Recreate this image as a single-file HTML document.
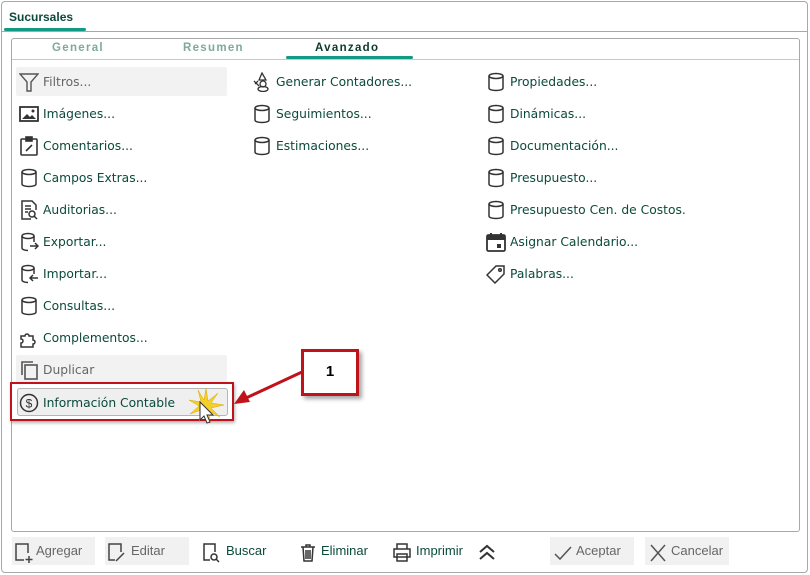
<!DOCTYPE html>
<html><head><meta charset="utf-8"><style>
*{box-sizing:border-box;margin:0;padding:0}
body{width:810px;height:575px;background:#fff;font-family:"Liberation Sans",sans-serif;position:relative;overflow:hidden;color:#0b4a3a}
.abs{position:absolute}
.outer{left:1px;top:1px;width:807px;height:572px;border:1px solid #a8a8a8;border-radius:4px}
.item{position:absolute;font-family:"DejaVu Sans",sans-serif;font-size:12.3px;height:28px;line-height:30px;white-space:nowrap}
.item svg{position:absolute;left:0;top:5px}
.item span{position:absolute;left:24px}
.ft{position:absolute;top:537px;height:28px;line-height:28px;font-family:"Liberation Sans Narrow","Liberation Sans",sans-serif;font-size:13px;color:#0b4a3a}
.ft.dis{background:#f1f1f1;color:#666}
.ft svg{position:absolute;top:5px}
.tab{position:absolute;top:42px;font-size:11.5px;font-weight:bold;letter-spacing:1.3px}
</style></head><body>
<div class="abs outer"></div>
<div class="abs" style="left:9px;top:10px;font-size:12px;font-weight:bold;color:#0b4a3a">Sucursales</div>
<div class="abs" style="left:4px;top:28px;width:82px;height:3px;background:#129a85;border-radius:2px"></div>
<div class="abs" style="left:1px;top:31px;width:807px;height:1px;background:#a8a8a8"></div>
<div class="abs" style="left:11px;top:38px;width:789px;height:494px;border:1px solid #a8a8a8;border-radius:3px"></div>
<div class="tab" style="left:52px;color:#7fa99c">General</div>
<div class="tab" style="left:183px;color:#7fa99c">Resumen</div>
<div class="tab" style="left:315px;color:#0b3a2e">Avanzado</div>
<div class="abs" style="left:286px;top:56px;width:127px;height:3px;background:#129a85;border-radius:2px"></div>
<div class="abs" style="left:12px;top:59px;width:787px;height:1px;background:#c8c8c8"></div>

<div class="abs" style="left:16px;top:67px;width:211px;height:29px;background:#f2f2f2;border-radius:2px"></div>
<div class="abs" style="left:16px;top:355px;width:211px;height:28px;background:#f2f2f2;border-radius:2px"></div>
<div class="abs" style="left:17px;top:388px;width:211px;height:28px;background:#efefef;border:1px solid #b5b5b5;border-radius:3px"></div>
<div class="abs" style="left:10px;top:382px;width:224px;height:39px;border:2px solid #c0121b;box-shadow:1px 2px 3px rgba(0,0,0,.3)"></div>

<!-- column 1 -->
<div class="item" style="left:19px;top:67px;color:#666"><svg width="20" height="20" viewBox="0 0 20 20" fill="none" stroke="#555" stroke-width="1.4"><path d="M1 2h18l-7 8v9h-4v-9z"/></svg><span>Filtros...</span></div>
<div class="item" style="left:19px;top:99px"><svg width="20" height="20" viewBox="0 0 20 20"><rect x="1" y="3" width="18" height="14" fill="none" stroke="#333" stroke-width="1.8"/><path d="M3 15l5-5 3 3 2-2 4 4z" fill="#333"/><circle cx="14" cy="7" r="1.5" fill="#333"/></svg><span>Imágenes...</span></div>
<div class="item" style="left:19px;top:131px"><svg width="20" height="20" viewBox="0 0 20 20" fill="none" stroke="#333" stroke-width="1.6"><rect x="2" y="3" width="16" height="16" rx="1"/><rect x="7" y="1" width="6" height="4" fill="#333"/><path d="M7 15l6-6"/></svg><span>Comentarios...</span></div>
<div class="item" style="left:19px;top:163px"><svg width="20" height="20" viewBox="0 0 20 20" fill="none" stroke="#333" stroke-width="1.5"><ellipse cx="10" cy="4" rx="7" ry="2.5"/><path d="M3 4v12c0 1.5 3 2.5 7 2.5s7-1 7-2.5V4"/></svg><span>Campos Extras...</span></div>
<div class="item" style="left:19px;top:195px"><svg width="20" height="20" viewBox="0 0 20 20" fill="none" stroke="#333" stroke-width="1.5"><path d="M12 19H3V1h10l4 4v5"/><path d="M6 6h6M6 9h6M6 12h3"/><circle cx="13" cy="14" r="3"/><path d="M15 16l3 3"/></svg><span>Auditorias...</span></div>
<div class="item" style="left:19px;top:227px"><svg width="20" height="20" viewBox="0 0 20 20" fill="none" stroke="#333" stroke-width="1.5"><ellipse cx="9" cy="4" rx="6" ry="2.5"/><path d="M3 4v12c0 1.5 3 2.5 6 2.5M15 4v6"/><path d="M11 14h8M16 11l3 3-3 3"/></svg><span>Exportar...</span></div>
<div class="item" style="left:19px;top:259px"><svg width="20" height="20" viewBox="0 0 20 20" fill="none" stroke="#333" stroke-width="1.5"><ellipse cx="9" cy="4" rx="6" ry="2.5"/><path d="M3 4v12c0 1.5 3 2.5 6 2.5M15 4v6"/><path d="M19 14h-8M14 11l-3 3 3 3"/></svg><span>Importar...</span></div>
<div class="item" style="left:19px;top:291px"><svg width="20" height="20" viewBox="0 0 20 20" fill="none" stroke="#333" stroke-width="1.5"><ellipse cx="10" cy="4" rx="7" ry="2.5"/><path d="M3 4v12c0 1.5 3 2.5 7 2.5s7-1 7-2.5V4"/></svg><span>Consultas...</span></div>
<div class="item" style="left:19px;top:323px"><svg width="20" height="20" viewBox="0 0 20 20" fill="none" stroke="#333" stroke-width="1.5"><path d="M2 8h4a2 2 0 1 1 4 0h4v4a2 2 0 1 1 0 4v3H2v-4a2 2 0 1 0 0-4z"/></svg><span>Complementos...</span></div>
<div class="item" style="left:19px;top:355px;color:#666"><svg width="20" height="20" viewBox="0 0 20 20" fill="none" stroke="#555" stroke-width="1.6"><rect x="6" y="5" width="12" height="14"/><path d="M3 15V2h11"/></svg><span>Duplicar</span></div>
<div class="item" style="left:19px;top:388px"><svg width="20" height="20" viewBox="0 0 20 20" fill="none" stroke="#333" stroke-width="1.5"><circle cx="10" cy="10" r="8.5"/><text x="10" y="14.5" font-size="12" text-anchor="middle" fill="#333" stroke="none" font-family="Liberation Sans">$</text></svg><span>Información Contable</span></div>
<svg class="abs" style="left:186px;top:386px" width="40" height="40" viewBox="0 0 40 40"><path d="M20 2l2 13 10-8-7 10 13 2-13 3 9 9-11-6 1 12-5-11-6 10 2-12-11 4 9-8-10-6 12 2-3-12 6 10z" fill="#f6d02a" stroke="#d9a800" stroke-width=".5"/><path d="M14 16v18l4-4 3 7 3-1-3-7h6z" fill="#fff" stroke="#333" stroke-width="1"/></svg>

<!-- column 2 -->
<div class="item" style="left:252px;top:67px"><svg width="20" height="20" viewBox="0 0 20 20" fill="none" stroke="#333" stroke-width="1.3"><path d="M10 1l-3 7h7z"/><circle cx="11" cy="12" r="3"/><ellipse cx="11" cy="17" rx="5" ry="2.5"/><path d="M2 9l5 5M3 12l3-3"/></svg><span>Generar Contadores...</span></div>
<div class="item" style="left:252px;top:99px"><svg width="20" height="20" viewBox="0 0 20 20" fill="none" stroke="#333" stroke-width="1.5"><ellipse cx="10" cy="4" rx="7" ry="2.5"/><path d="M3 4v12c0 1.5 3 2.5 7 2.5s7-1 7-2.5V4"/></svg><span>Seguimientos...</span></div>
<div class="item" style="left:252px;top:131px"><svg width="20" height="20" viewBox="0 0 20 20" fill="none" stroke="#333" stroke-width="1.5"><ellipse cx="10" cy="4" rx="7" ry="2.5"/><path d="M3 4v12c0 1.5 3 2.5 7 2.5s7-1 7-2.5V4"/></svg><span>Estimaciones...</span></div>

<!-- column 3 -->
<div class="item" style="left:486px;top:67px"><svg width="20" height="20" viewBox="0 0 20 20" fill="none" stroke="#333" stroke-width="1.5"><ellipse cx="10" cy="4" rx="7" ry="2.5"/><path d="M3 4v12c0 1.5 3 2.5 7 2.5s7-1 7-2.5V4"/></svg><span>Propiedades...</span></div>
<div class="item" style="left:486px;top:99px"><svg width="20" height="20" viewBox="0 0 20 20" fill="none" stroke="#333" stroke-width="1.5"><ellipse cx="10" cy="4" rx="7" ry="2.5"/><path d="M3 4v12c0 1.5 3 2.5 7 2.5s7-1 7-2.5V4"/></svg><span>Dinámicas...</span></div>
<div class="item" style="left:486px;top:131px"><svg width="20" height="20" viewBox="0 0 20 20" fill="none" stroke="#333" stroke-width="1.5"><ellipse cx="10" cy="4" rx="7" ry="2.5"/><path d="M3 4v12c0 1.5 3 2.5 7 2.5s7-1 7-2.5V4"/></svg><span>Documentación...</span></div>
<div class="item" style="left:486px;top:163px"><svg width="20" height="20" viewBox="0 0 20 20" fill="none" stroke="#333" stroke-width="1.5"><ellipse cx="10" cy="4" rx="7" ry="2.5"/><path d="M3 4v12c0 1.5 3 2.5 7 2.5s7-1 7-2.5V4"/></svg><span>Presupuesto...</span></div>
<div class="item" style="left:486px;top:195px"><svg width="20" height="20" viewBox="0 0 20 20" fill="none" stroke="#333" stroke-width="1.5"><ellipse cx="10" cy="4" rx="7" ry="2.5"/><path d="M3 4v12c0 1.5 3 2.5 7 2.5s7-1 7-2.5V4"/></svg><span>Presupuesto Cen. de Costos.</span></div>
<div class="item" style="left:486px;top:227px"><svg width="20" height="20" viewBox="0 0 20 20"><rect x="1" y="3" width="18" height="16" rx="1.5" fill="none" stroke="#333" stroke-width="1.8"/><rect x="1" y="3" width="18" height="5" fill="#333"/><path d="M5 1v4M15 1v4" stroke="#333" stroke-width="2"/><rect x="11" y="12" width="4" height="4" fill="#333"/></svg><span>Asignar Calendario...</span></div>
<div class="item" style="left:486px;top:259px"><svg width="20" height="20" viewBox="0 0 20 20" fill="none" stroke="#333" stroke-width="1.5"><path d="M1 11l9-9h8v8l-9 9z"/><circle cx="14" cy="6" r="1.3"/></svg><span>Palabras...</span></div>

<!-- callout -->
<div class="abs" style="left:301px;top:349px;width:58px;height:47px;border:3px solid #c0121b;background:#fff;box-shadow:3px 3px 4px rgba(0,0,0,.35);text-align:center;line-height:40px;font-weight:bold;font-size:15px;color:#000">1</div>
<svg class="abs" style="left:228px;top:365px" width="76" height="45" viewBox="0 0 76 45"><path d="M74 7L18 33" stroke="#c0121b" stroke-width="3"/><path d="M6 39l10-14 6 12z" fill="#c0121b"/></svg>

<!-- footer -->
<div class="ft dis" style="left:12px;width:83px"><svg style="left:2px" width="20" height="22" viewBox="0 0 20 22" fill="none" stroke="#444" stroke-width="1.5"><path d="M10 18H2V2h12v9"/><path d="M15 14v7M11.5 17.5h7"/></svg><span style="position:absolute;left:24px">Agregar</span></div>
<div class="ft dis" style="left:105px;width:84px"><svg style="left:2px" width="20" height="22" viewBox="0 0 20 22" fill="none" stroke="#444" stroke-width="1.5"><path d="M8 18H2V2h12v8"/><path d="M9 19l8-8"/></svg><span style="position:absolute;left:26px">Editar</span></div>
<div class="ft" style="left:202px;width:80px"><svg style="left:0" width="20" height="22" viewBox="0 0 20 22" fill="none" stroke="#333" stroke-width="1.5"><path d="M8 18H2V2h11v8"/><circle cx="12" cy="15" r="3"/><path d="M14 17l3 3"/></svg><span style="position:absolute;left:24px">Buscar</span></div>
<div class="ft" style="left:298px;width:80px"><svg style="left:0" width="20" height="22" viewBox="0 0 20 22" fill="none" stroke="#333" stroke-width="1.5"><path d="M3 5h14M8 5V3h4v2M5 5l1 14h8l1-14M8 8v9M10 8v9M12 8v9"/></svg><span style="position:absolute;left:23px">Eliminar</span></div>
<div class="ft" style="left:392px;width:100px"><svg style="left:0" width="20" height="22" viewBox="0 0 20 22" fill="none" stroke="#333" stroke-width="1.5"><path d="M5 7V2h10v5M2 7h16v8H2zM5 12h10v7H5z"/></svg><span style="position:absolute;left:24px">Imprimir</span><svg style="left:85px" width="20" height="22" viewBox="0 0 20 22" fill="none" stroke="#333" stroke-width="2"><path d="M3 10l7-6 7 6M3 17l7-6 7 6"/></svg></div>
<div class="ft dis" style="left:550px;width:84px"><svg style="left:3px" width="20" height="22" viewBox="0 0 20 22" fill="none" stroke="#555" stroke-width="1.5"><path d="M2 12l5 5L18 5"/></svg><span style="position:absolute;left:26px">Aceptar</span></div>
<div class="ft dis" style="left:645px;width:84px"><svg style="left:3px" width="20" height="22" viewBox="0 0 20 22" fill="none" stroke="#555" stroke-width="1.5"><path d="M3 3l14 16M17 3L3 19"/></svg><span style="position:absolute;left:26px">Cancelar</span></div>
</body></html>
